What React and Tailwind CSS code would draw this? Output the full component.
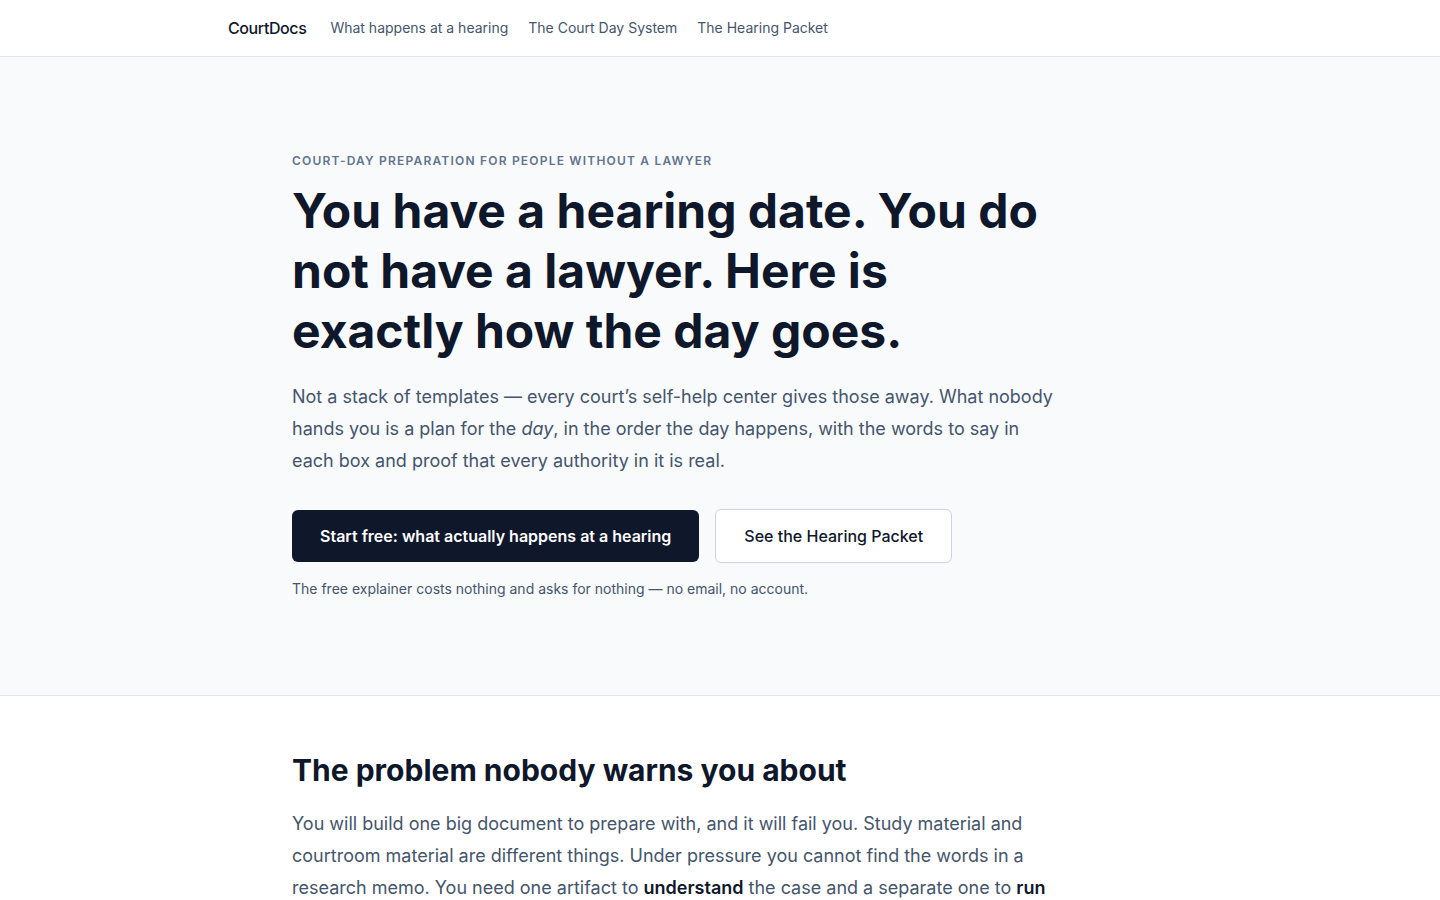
import React from 'react';

const navLinks = ['What happens at a hearing', 'The Court Day System', 'The Hearing Packet'];

const Header = () => (
    <header className="border-b border-slate-200 bg-white">
        <nav className="mx-auto flex h-14 max-w-5xl items-center gap-5 px-5">
            <a href="#" className="mr-1 text-base font-medium tracking-tight text-slate-900">
                CourtDocs
            </a>
            {navLinks.map(link => (
                <a key={link} href="#" className="text-sm text-slate-600 hover:text-slate-900">
                    {link}
                </a>
            ))}
        </nav>
    </header>
);

const Hero = () => (
    <section className="border-b border-slate-200 bg-slate-50">
        <div className="mx-auto max-w-4xl px-5 py-24">
            <p className="text-xs font-semibold uppercase tracking-widest text-slate-500">
                Court-day preparation for people without a lawyer
            </p>
            <h1 className="mt-3 max-w-3xl text-5xl font-bold leading-tight text-slate-900">
                You have a hearing date. You do not have a lawyer. Here is exactly how the day goes.
            </h1>
            <p className="mt-5 max-w-3xl text-lg leading-8 text-slate-600">
                Not a stack of templates — every court’s self-help center gives those away. What
                nobody hands you is a plan for the <em>day</em>, in the order the day happens, with
                the words to say in each box and proof that every authority in it is real.
            </p>
            <div className="mt-8 flex items-center gap-4">
                <a
                    href="#"
                    className="rounded-md bg-slate-900 px-7 py-3.5 text-base font-semibold text-white hover:bg-slate-800"
                >
                    Start free: what actually happens at a hearing
                </a>
                <a
                    href="#"
                    className="rounded-md border border-slate-300 bg-white px-7 py-3.5 text-base font-medium text-slate-900 hover:bg-slate-100"
                >
                    See the Hearing Packet
                </a>
            </div>
            <p className="mt-4 text-sm text-slate-600">
                The free explainer costs nothing and asks for nothing — no email, no account.
            </p>
        </div>
    </section>
);

const Problem = () => (
    <section className="bg-white">
        <div className="mx-auto max-w-4xl px-5 py-14">
            <h2 className="text-3xl font-bold text-slate-900">
                The problem nobody warns you about
            </h2>
            <p className="mt-5 max-w-3xl text-lg leading-8 text-slate-600">
                You will build one big document to prepare with, and it will fail you. Study
                material and courtroom material are different things. Under pressure you cannot
                find the words in a research memo. You need one artifact to{' '}
                <strong className="font-semibold text-slate-900">understand</strong> the case and a
                separate one to <strong className="font-semibold text-slate-900">run</strong> the
                hearing.
            </p>
        </div>
    </section>
);

export default function App() {
    return (
        <div className="min-h-screen bg-white" style={{ fontFamily: 'Inter, "Noto Sans", sans-serif' }}>
            <Header />
            <Hero />
            <Problem />
        </div>
    );
}
